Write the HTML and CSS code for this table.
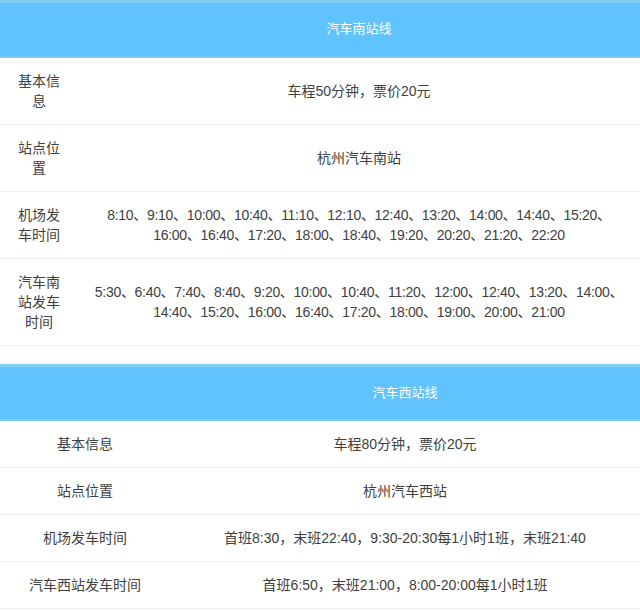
FILE: index.html
```html
<!DOCTYPE html>
<html lang="zh-CN">
<head>
<meta charset="utf-8">
<title>机场大巴</title>
<link rel="stylesheet" href="styles.css">
</head>
<body>
<table class="route route-narrow">
  <thead>
    <tr><th class="label"></th><th class="data">汽车南站线</th></tr>
  </thead>
  <tbody>
    <tr><td class="label">基本信息</td><td class="data">车程50分钟，票价20元</td></tr>
    <tr><td class="label">站点位置</td><td class="data">杭州汽车南站</td></tr>
    <tr><td class="label">机场发车时间</td><td class="data times">8:10、9:10、10:00、10:40、11:10、12:10、12:40、13:20、14:00、14:40、15:20、16:00、16:40、17:20、18:00、18:40、19:20、20:20、21:20、22:20</td></tr>
    <tr><td class="label">汽车南站发车时间</td><td class="data times">5:30、6:40、7:40、8:40、9:20、10:00、10:40、11:20、12:00、12:40、13:20、14:00、14:40、15:20、16:00、16:40、17:20、18:00、19:00、20:00、21:00</td></tr>
  </tbody>
</table>
<table class="route route-wide">
  <thead>
    <tr><th class="label"></th><th class="data">汽车西站线</th></tr>
  </thead>
  <tbody>
    <tr><td class="label">基本信息</td><td class="data">车程80分钟，票价20元</td></tr>
    <tr><td class="label">站点位置</td><td class="data">杭州汽车西站</td></tr>
    <tr><td class="label">机场发车时间</td><td class="data">首班8:30，末班22:40，9:30-20:30每1小时1班，末班21:40</td></tr>
    <tr><td class="label">汽车西站发车时间</td><td class="data">首班6:50，末班21:00，8:00-20:00每1小时1班</td></tr>
  </tbody>
</table>
</body>
</html>
```
FILE: styles.css
```css
html, body {
  margin: 0;
  padding: 0;
  background: #ffffff;
}
body {
  font-family: "Liberation Sans", "Noto Sans CJK SC", sans-serif;
  font-size: 14px;
  color: #404040;
}
.route {
  width: 640px;
  border-collapse: collapse;
  table-layout: fixed;
}
.route + .route {
  margin-top: 18px;
}
.route th {
  background: #61c3fd;
  color: #ffffff;
  font-weight: normal;
  font-size: 13px;
  height: 55px;
  padding: 0 0 3px;
  border-top: 3px solid #7fccf1;
  border-bottom: 2px solid #7cc8ee;
  text-align: center;
  box-sizing: border-box;
}
.route td {
  text-align: center;
  vertical-align: middle;
  line-height: 20px;
  padding: 13px 10px;
  border-bottom: 1px solid #ededed;
}
.route td.times {
  letter-spacing: -0.3px;
}
.route-narrow .label { width: 78px; }
.route-narrow td.label { padding: 13px 12px; }
.route-narrow td.data { padding: 13px 8px; }
.route-wide .label { width: 170px; }
```
